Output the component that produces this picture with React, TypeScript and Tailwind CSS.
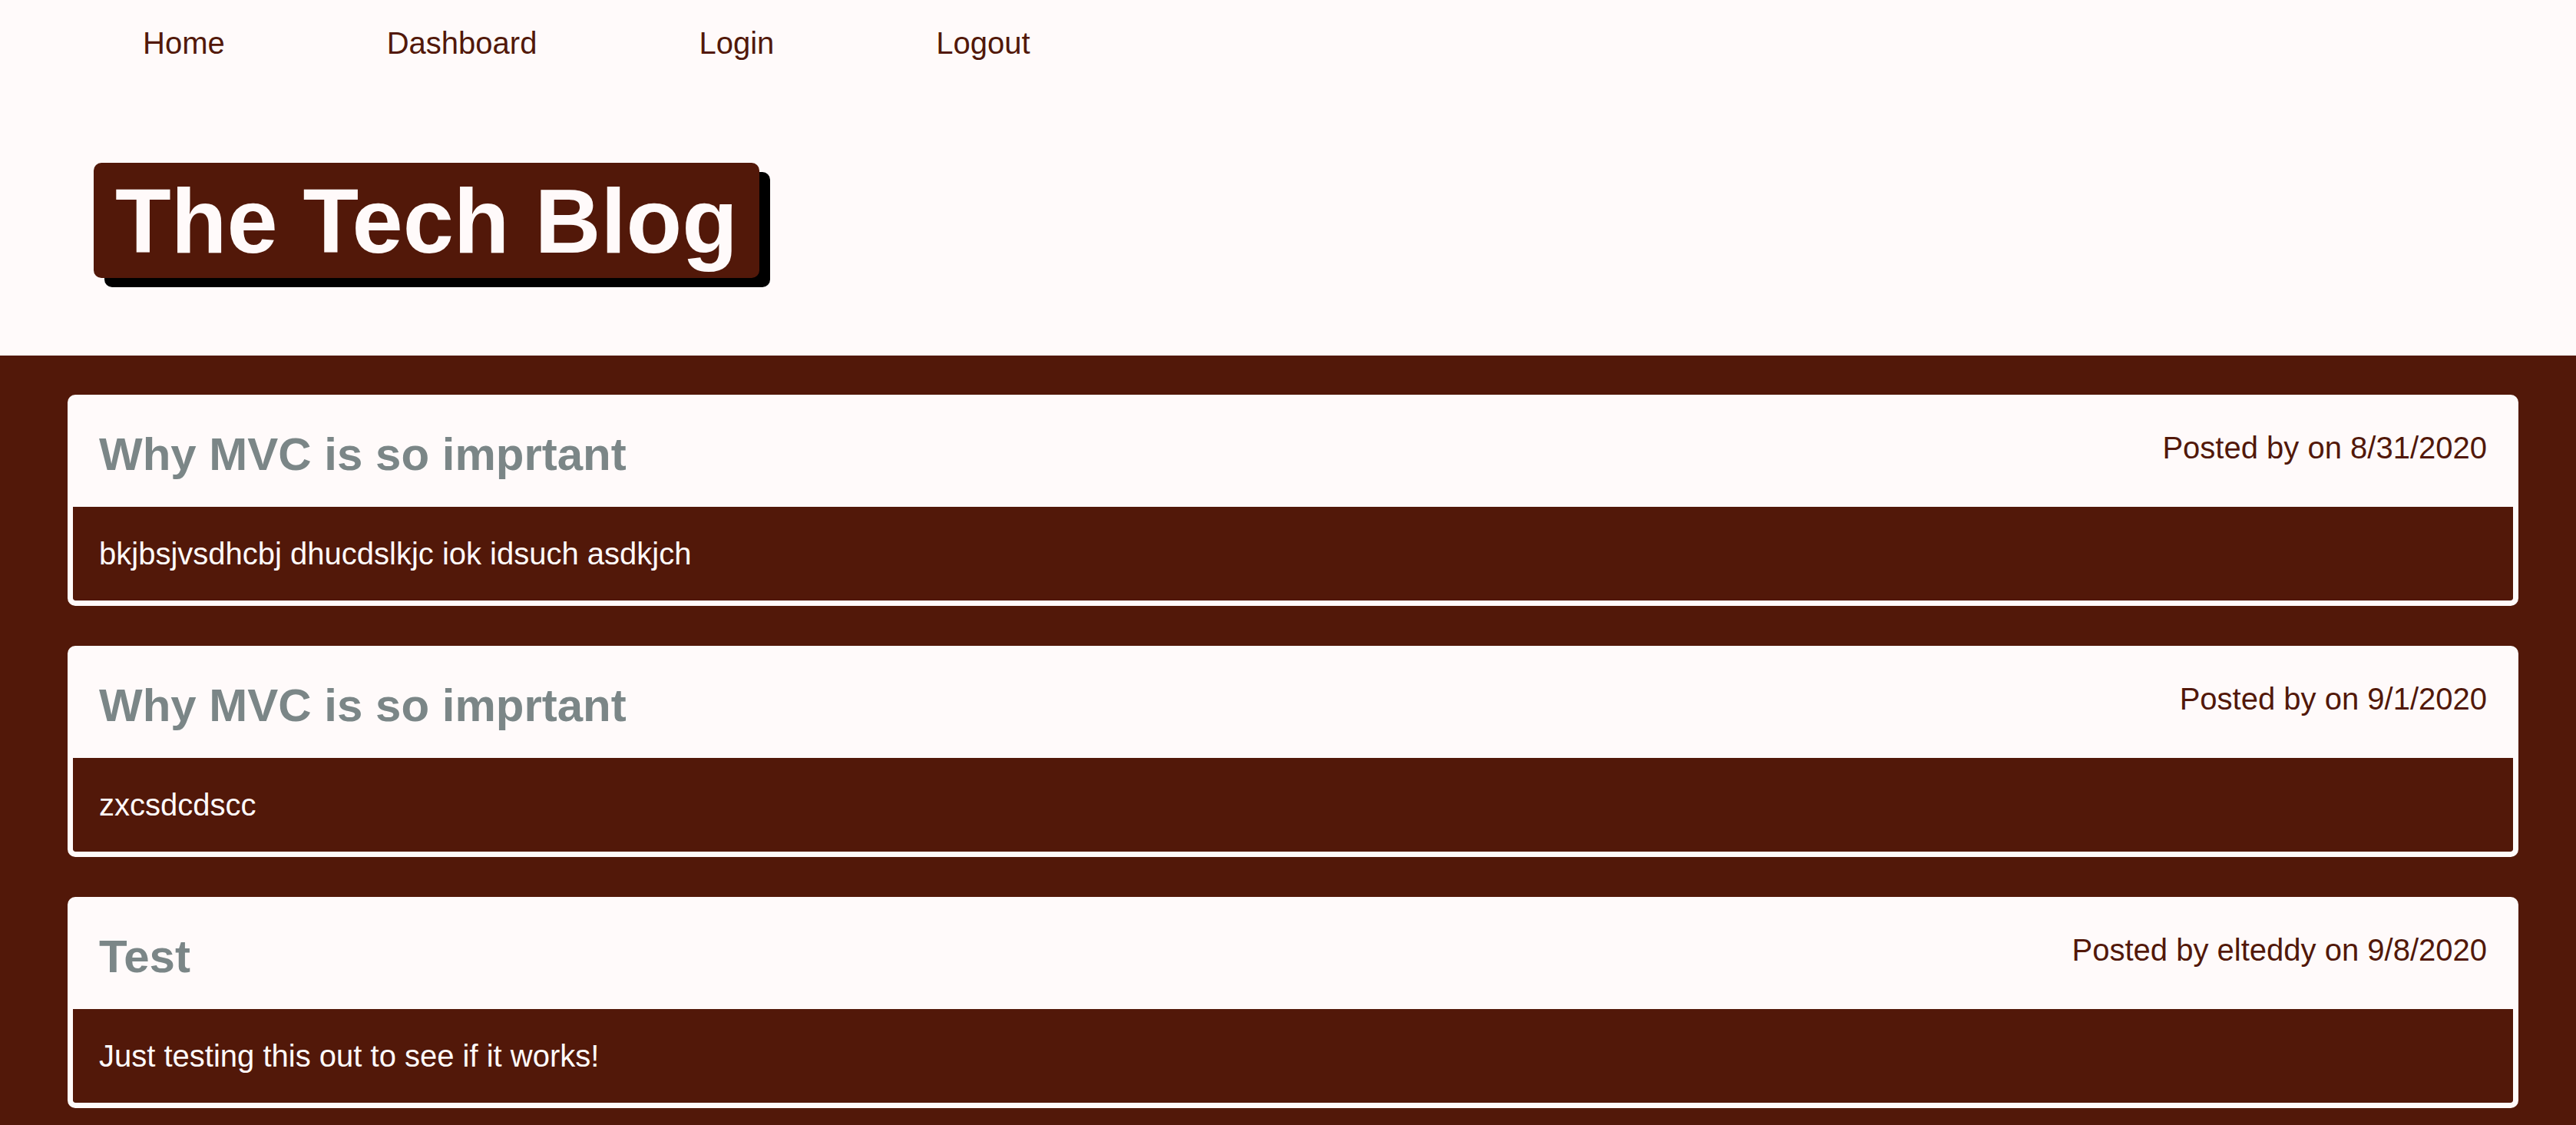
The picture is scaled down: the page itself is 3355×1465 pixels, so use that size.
import React from "react";

const posts = [
  {
    title: "Why MVC is so imprtant",
    meta: "Posted by on 8/31/2020",
    body: "bkjbsjvsdhcbj dhucdslkjc iok idsuch asdkjch",
  },
  {
    title: "Why MVC is so imprtant",
    meta: "Posted by on 9/1/2020",
    body: "zxcsdcdscc",
  },
  {
    title: "Test",
    meta: "Posted by elteddy on 9/8/2020",
    body: "Just testing this out to see if it works!",
  },
];

export default function App() {
  return (
    <div className="min-h-screen bg-[#fffafa] font-['Liberation_Sans',Arial,sans-serif]">
      <header className="h-[463px]">
        <nav className="flex gap-[211px] pl-[186px] pt-[33px] text-[40px] leading-[46px] text-[#521809]">
          <a href="#">Home</a>
          <a href="#">Dashboard</a>
          <a href="#">Login</a>
          <a href="#">Logout</a>
        </nav>
        <div className="pl-[122px] pt-[133px]">
          <h1 className="inline-block rounded-[10px] bg-[#521809] px-[28px] pt-[7px] pb-[6px] text-[119px] font-bold leading-[137px] text-[#fffafa] shadow-[14px_12px_0_#000]">
            The Tech Blog
          </h1>
        </div>
      </header>
      <main className="flex min-h-[1002px] flex-col gap-[52px] bg-[#521809] pt-[51px] pb-[52px] pl-[88px] pr-[75px]">
        {posts.map((p, i) => (
          <article
            key={i}
            className="overflow-hidden rounded-[10px] border-[7px] border-[#fffafa] bg-[#fffafa]"
          >
            <div className="flex h-[139px] items-start justify-between px-[34px]">
              <h2 className="mt-[36px] text-[60px] font-bold leading-[69px] text-[#7b8687]">
                {p.title}
              </h2>
              <p className="mt-[39px] text-[40px] leading-[46px] text-[#521809]">
                {p.meta}
              </p>
            </div>
            <div className="rounded-b-[3px] bg-[#521809] px-[34px] pt-[38px] pb-[38px] text-[40px] leading-[46px] text-[#fffafa]">
              {p.body}
            </div>
          </article>
        ))}
      </main>
    </div>
  );
}
